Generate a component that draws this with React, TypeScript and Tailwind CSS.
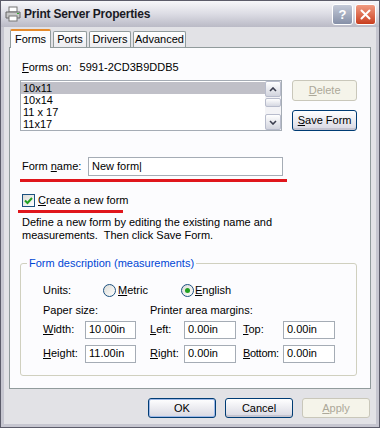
import type { ReactNode } from 'react';

const font = "font-['Liberation_Sans',Arial,sans-serif]";

function XPButton({ children, disabled, isDefault, className = '' }: { children: ReactNode; disabled?: boolean; isDefault?: boolean; className?: string }) {
  if (disabled) {
    return (
      <div className={`flex items-center justify-center rounded-[3px] border border-[#c9c7ba] bg-[#f5f4ea] text-[#aca899] ${className}`}>
        {children}
      </div>
    );
  }
  return (
    <div className={`flex items-center justify-center rounded-[3px] border border-[#003c74] bg-gradient-to-b from-white to-[#d8d8e2] text-black ${isDefault ? 'shadow-[inset_0_0_0_1px_#9cb8e8]' : 'shadow-[inset_0_-2px_0_#c4c4d0]'} ${className}`}>
      {children}
    </div>
  );
}

function TextBox({ value, className = '' }: { value: string; className?: string }) {
  return (
    <div className={`flex shrink-0 items-center border border-[#a5acb5] bg-white pl-[3px] text-black ${className}`}>
      {value}
    </div>
  );
}

function Radio({ checked }: { checked?: boolean }) {
  return (
    <span className="flex h-[13px] w-[13px] items-center justify-center rounded-full border border-[#1c5180] bg-gradient-to-br from-[#dcdcd7] to-white">
      {checked && <span className="h-[5px] w-[5px] rounded-full bg-[#21a121]" />}
    </span>
  );
}

export default function App() {
  const forms = ['10x11', '10x14', '11 x 17', '11x17'];

  return (
    <div className={`${font} h-[428px] w-[380px] overflow-hidden border border-[#5c5c6a] bg-[#c6c6d0] text-[11px] leading-[13px] text-black`}>
      {/* Title bar */}
      <div className="flex h-[26px] items-center bg-gradient-to-b from-[#f7f7fa] via-[#dcdce4] to-[#babac6] pl-[4px] pr-[3px]">
        <svg width="16" height="16" viewBox="0 0 16 16" className="mr-[3px]">
          <rect x="4" y="1" width="8" height="5" fill="#fff" stroke="#777" />
          <path d="M1 6h14v6H1z" fill="#c8c8c8" stroke="#666" />
          <rect x="4" y="10" width="8" height="5" fill="#fff" stroke="#777" />
          <rect x="12" y="7" width="2" height="1" fill="#3a3" />
        </svg>
        <span className="text-[12px] font-bold tracking-[-0.2px] text-[#1a1a24]">Print Server Properties</span>
        <div className="ml-auto flex gap-[2px]">
          <div className="flex h-[21px] w-[21px] items-center justify-center rounded-[3px] border border-white bg-gradient-to-b from-[#c4cad8] to-[#8690a8] text-[13px] font-bold text-white">?</div>
          <div className="flex h-[21px] w-[21px] items-center justify-center rounded-[3px] border border-white bg-gradient-to-b from-[#f09a80] to-[#c83c1c]">
            <svg width="11" height="11" viewBox="0 0 11 11">
              <path d="M1.5 1.5l8 8M9.5 1.5l-8 8" stroke="#fff" strokeWidth="2" strokeLinecap="round" />
            </svg>
          </div>
        </div>
      </div>

      {/* Body */}
      <div className="mx-[3px] h-[397px] bg-[#e2e2e6] px-[5px] pt-[2px]">
        {/* Tabs */}
        <div className="relative z-10 flex h-[18px] items-end pl-[1px]">
          <div className="-mb-[1px] flex h-[19px] w-[41px] items-center justify-center rounded-t-[2px] border border-b-0 border-[#919b9c] border-t-[#e68b2c] border-t-[2px] bg-[#fcfcfe]">Forms</div>
          <div className="ml-[2px] flex h-[16px] w-[34px] items-center justify-center rounded-t-[2px] border border-b-0 border-[#919b9c] bg-gradient-to-b from-white to-[#ececf0]">Ports</div>
          <div className="ml-[2px] flex h-[16px] w-[42px] items-center justify-center rounded-t-[2px] border border-b-0 border-[#919b9c] bg-gradient-to-b from-white to-[#ececf0]">Drivers</div>
          <div className="ml-[2px] flex h-[16px] w-[53px] items-center justify-center rounded-t-[2px] border border-b-0 border-[#919b9c] bg-gradient-to-b from-white to-[#ececf0]">Advanced</div>
        </div>

        {/* Tab page */}
        <div className="flex h-[342px] flex-col border border-[#919b9c] bg-[#fcfcfe] pl-[10px] pr-[13px]">
          <div className="mt-[12px] flex h-[14px] items-center pl-[2px]">
            <span><u>F</u>orms on:</span>
            <span className="ml-[8px]">5991-2CD3B9DDB5</span>
          </div>

          <div className="mt-[6px] flex h-[51px]">
            <div className="flex w-[263px] border border-[#a5acb5] bg-white">
              <div className="flex-1 pt-[1px]">
                {forms.map((f, i) => (
                  <div key={f} className={`h-[12px] pl-[2px] leading-[12px] ${i === 0 ? 'bg-[#c0c0c8]' : ''}`}>{f}</div>
                ))}
              </div>
              <div className="flex w-[16px] flex-col bg-[#f3f3f6]">
                <div className="flex h-[16px] items-center justify-center rounded-[2px] border border-[#b8bccc] bg-gradient-to-b from-white to-[#d2d4de]">
                  <svg width="8" height="5" viewBox="0 0 8 5"><path d="M1 4l3-3 3 3" stroke="#3a3d4e" strokeWidth="1.6" fill="none" /></svg>
                </div>
                <div className="mt-[1px] h-[9px] rounded-[2px] border border-[#b8bccc] bg-gradient-to-b from-white to-[#d6d8e2]" />
                <div className="mt-auto flex h-[16px] items-center justify-center rounded-[2px] border border-[#b8bccc] bg-gradient-to-b from-white to-[#d2d4de]">
                  <svg width="8" height="5" viewBox="0 0 8 5"><path d="M1 1l3 3 3-3" stroke="#3a3d4e" strokeWidth="1.6" fill="none" /></svg>
                </div>
              </div>
            </div>
            <div className="ml-[10px] flex w-[65px] flex-col justify-between">
              <XPButton disabled className="h-[21px]"><u>D</u>elete</XPButton>
              <XPButton className="h-[21px]"><u>S</u>ave Form</XPButton>
            </div>
          </div>

          <div className="mt-[26px] flex h-[19px] items-center pl-[2px]">
            <span className="w-[66px] shrink-0">Form <u>n</u>ame:</span>
            <TextBox value="New form|" className="h-[19px] w-[195px]" />
          </div>
          <div className="mt-[3px] h-[3px] w-[267px] bg-[#e0161c]" />

          <div className="mt-[11px] flex h-[14px] items-center pl-[2px]">
            <span className="flex h-[13px] w-[13px] items-center justify-center border border-[#1c5180] bg-gradient-to-br from-[#dcdcd7] to-white">
              <svg width="9" height="9" viewBox="0 0 9 9"><path d="M1 4.5l2.5 2.5L8 2" stroke="#21a121" strokeWidth="2" fill="none" /></svg>
            </span>
            <span className="ml-[3px]"><u>C</u>reate a new form</span>
          </div>
          <div className="mt-[3px] -ml-[2px] h-[3px] w-[105px] bg-[#e0161c]" />

          <div className="mt-[3px] pl-[2px] leading-[12.5px]">
            <div>Define a new form by editing the existing name and</div>
            <div>measurements.&nbsp; Then click Save Form.</div>
          </div>

          <fieldset className="mt-[16px] h-[119px] w-[337px] rounded-[3px] border border-[#d0d0bf] pl-[22px]">
            <legend className="-ml-[16px] px-[2px] text-[#0046d5]">Form description (measurements)</legend>
            <div className="mt-[13px] flex h-[14px] items-center">
              <span className="w-[60px]">Units:</span>
              <Radio />
              <span className="ml-[2px] w-[63px]"><u>M</u>etric</span>
              <Radio checked />
              <span className="ml-[1px]"><u>E</u>nglish</span>
            </div>
            <div className="mt-[7px] flex h-[13px] items-center">
              <span className="w-[107px]">Paper size:</span>
              <span>Printer area margins:</span>
            </div>
            <div className="mt-[3px] flex h-[19px] items-center">
              <span className="w-[42px] shrink-0"><u>W</u>idth:</span>
              <TextBox value="10.00in" className="h-[18px] w-[51px]" />
              <span className="ml-[14px] w-[34px] shrink-0"><u>L</u>eft:</span>
              <TextBox value="0.00in" className="h-[18px] w-[52px]" />
              <span className="ml-[7px] w-[40px] shrink-0"><u>T</u>op:</span>
              <TextBox value="0.00in" className="h-[18px] w-[52px]" />
            </div>
            <div className="mt-[5px] flex h-[19px] items-center">
              <span className="w-[42px] shrink-0"><u>H</u>eight:</span>
              <TextBox value="11.00in" className="h-[18px] w-[51px]" />
              <span className="ml-[14px] w-[34px] shrink-0"><u>R</u>ight:</span>
              <TextBox value="0.00in" className="h-[18px] w-[52px]" />
              <span className="ml-[7px] w-[40px] shrink-0 tracking-[-0.3px]"><u>B</u>ottom:</span>
              <TextBox value="0.00in" className="h-[18px] w-[52px]" />
            </div>
          </fieldset>
        </div>

        {/* Dialog buttons */}
        <div className="mt-[9px] flex justify-end gap-[9px] pr-[1px]">
          <XPButton isDefault className="h-[20px] w-[68px]">OK</XPButton>
          <XPButton className="h-[20px] w-[68px]">Cancel</XPButton>
          <XPButton disabled className="h-[20px] w-[68px]"><u>A</u>pply</XPButton>
        </div>
      </div>
    </div>
  );
}
